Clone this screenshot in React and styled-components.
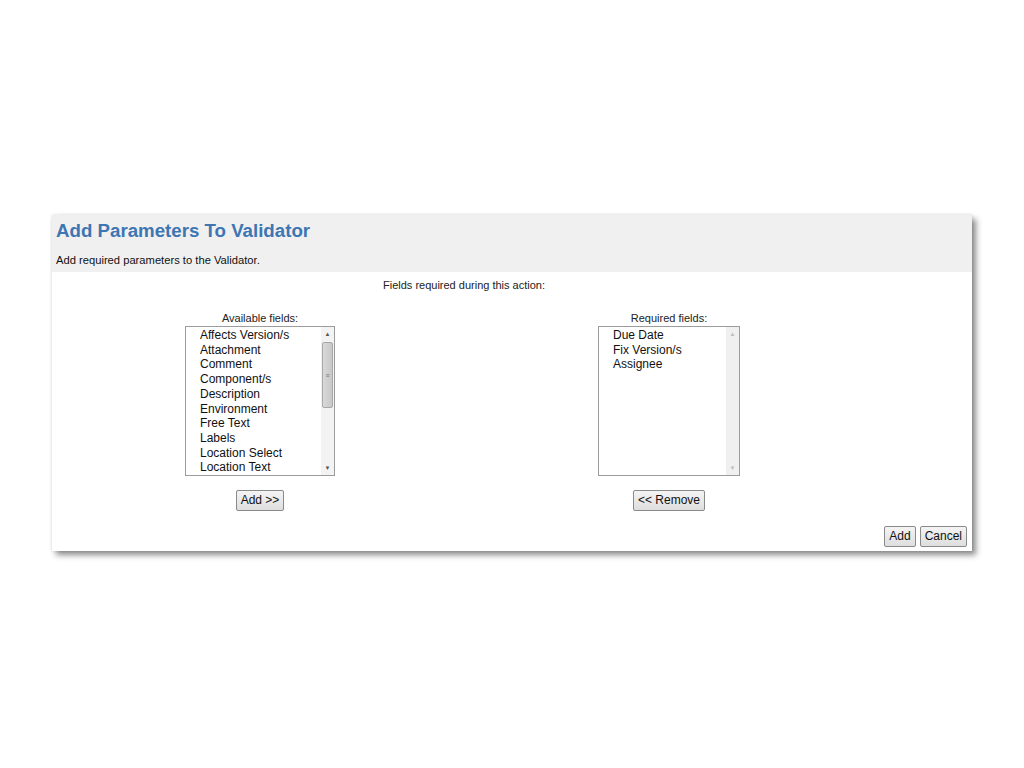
import styled, { createGlobalStyle } from 'styled-components';

const GlobalStyle = createGlobalStyle`
  html, body {
    margin: 0;
    padding: 0;
    background: #ffffff;
    font-family: "Liberation Sans", Arial, sans-serif;
    color: #222;
  }
`;

const Page = styled.div`
  width: 1024px;
  height: 768px;
  padding: 215px 0 0 52px;
  box-sizing: border-box;
`;

const Dialog = styled.div`
  width: 920px;
  height: 336px;
  background: #fff;
  box-shadow: 4px 4px 6px rgba(0, 0, 0, 0.45), 0 0 3px rgba(0, 0, 0, 0.12);
  display: flex;
  flex-direction: column;
`;

const Header = styled.div`
  background: #f0f0f0;
  height: 57px;
  padding: 5px 4px 0;
  box-sizing: border-box;
`;

const Title = styled.h2`
  margin: 0;
  font-size: 18.7px;
  font-weight: bold;
  color: #3d76b2;
  line-height: 22px;
`;

const Subtitle = styled.p`
  margin: 12px 0 0;
  font-size: 11.2px;
  line-height: 13px;
  color: #111;
`;

const Body = styled.div`
  flex: 1;
  display: flex;
  flex-direction: column;
`;

const FieldsTable = styled.div`
  width: 818px;
  display: grid;
  grid-template-columns: 416px 402px;
`;

const Heading = styled.div`
  grid-column: 1 / 3;
  text-align: center;
  font-size: 11px;
  line-height: 13px;
  padding: 7px 0 20px 6px;
`;

const Column = styled.div`
  display: flex;
  flex-direction: column;
  align-items: center;
`;

const ColumnLabel = styled.div`
  font-size: 11px;
  line-height: 13px;
  margin-bottom: 1px;
`;

const ListBox = styled.div`
  width: ${(p) => p.$width}px;
  height: 150px;
  box-sizing: border-box;
  border: 1px solid #9c9c9c;
  display: flex;
  background: #fff;
`;

const Options = styled.ul`
  flex: 1;
  margin: 0;
  padding: 1px 0 0 14px;
  list-style: none;
  overflow: hidden;
`;

const Option = styled.li`
  font-size: 12px;
  line-height: 14.7px;
  white-space: nowrap;
  color: #111;
`;

const Scrollbar = styled.div`
  width: 13px;
  background: ${(p) => (p.$disabled ? '#f0f0f0' : '#f3f3f3')};
  display: flex;
  flex-direction: column;
  align-items: center;
`;

const Arrow = styled.div`
  height: 14px;
  width: 13px;
  display: flex;
  align-items: center;
  justify-content: center;
  font-size: 6px;
  color: ${(p) => (p.$disabled ? '#bdbdbd' : '#555')};
`;

const Thumb = styled.div`
  width: 9px;
  height: 64px;
  margin-top: 1px;
  background: linear-gradient(to right, #d8d8d8, #c8c8c8);
  border: 1px solid #a8a8a8;
  border-radius: 2px;
  display: flex;
  align-items: center;
  justify-content: center;
  font-size: 7px;
  color: #777;
`;

const Track = styled.div`
  flex: 1;
`;

const Button = styled.button`
  font-family: "Liberation Sans", Arial, sans-serif;
  font-size: 12px;
  line-height: 14px;
  padding: 2px 4px 3px;
  color: #111;
  background: linear-gradient(to bottom, #f4f4f4, #dedede);
  border: 1px solid #8a8a8a;
  border-radius: 2px;
  cursor: pointer;
`;

const MoveButton = styled(Button)`
  margin-top: 14px;
`;

const Footer = styled.div`
  margin-top: auto;
  display: flex;
  justify-content: flex-end;
  gap: 4px;
  padding: 0 5px 4px 0;
`;

const available = [
  'Affects Version/s',
  'Attachment',
  'Comment',
  'Component/s',
  'Description',
  'Environment',
  'Free Text',
  'Labels',
  'Location Select',
  'Location Text',
];

const required = ['Due Date', 'Fix Version/s', 'Assignee'];

const FieldList = ({ items, width, disabled }) => (
  <ListBox $width={width}>
    <Options>
      {items.map((item) => (
        <Option key={item}>{item}</Option>
      ))}
    </Options>
    <Scrollbar $disabled={disabled}>
      <Arrow $disabled={disabled}>▲</Arrow>
      {disabled ? <Track /> : <Thumb>≡</Thumb>}
      {!disabled && <Track />}
      <Arrow $disabled={disabled}>▼</Arrow>
    </Scrollbar>
  </ListBox>
);

const App = () => (
  <Page>
    <GlobalStyle />
    <Dialog>
      <Header>
        <Title>Add Parameters To Validator</Title>
        <Subtitle>Add required parameters to the Validator.</Subtitle>
      </Header>
      <Body>
        <FieldsTable>
          <Heading>Fields required during this action:</Heading>
          <Column>
            <ColumnLabel>Available fields:</ColumnLabel>
            <FieldList items={available} width={150} />
            <MoveButton>Add &gt;&gt;</MoveButton>
          </Column>
          <Column>
            <ColumnLabel>Required fields:</ColumnLabel>
            <FieldList items={required} width={142} disabled />
            <MoveButton>&lt;&lt; Remove</MoveButton>
          </Column>
        </FieldsTable>
        <Footer>
          <Button>Add</Button>
          <Button>Cancel</Button>
        </Footer>
      </Body>
    </Dialog>
  </Page>
);

export default App;
